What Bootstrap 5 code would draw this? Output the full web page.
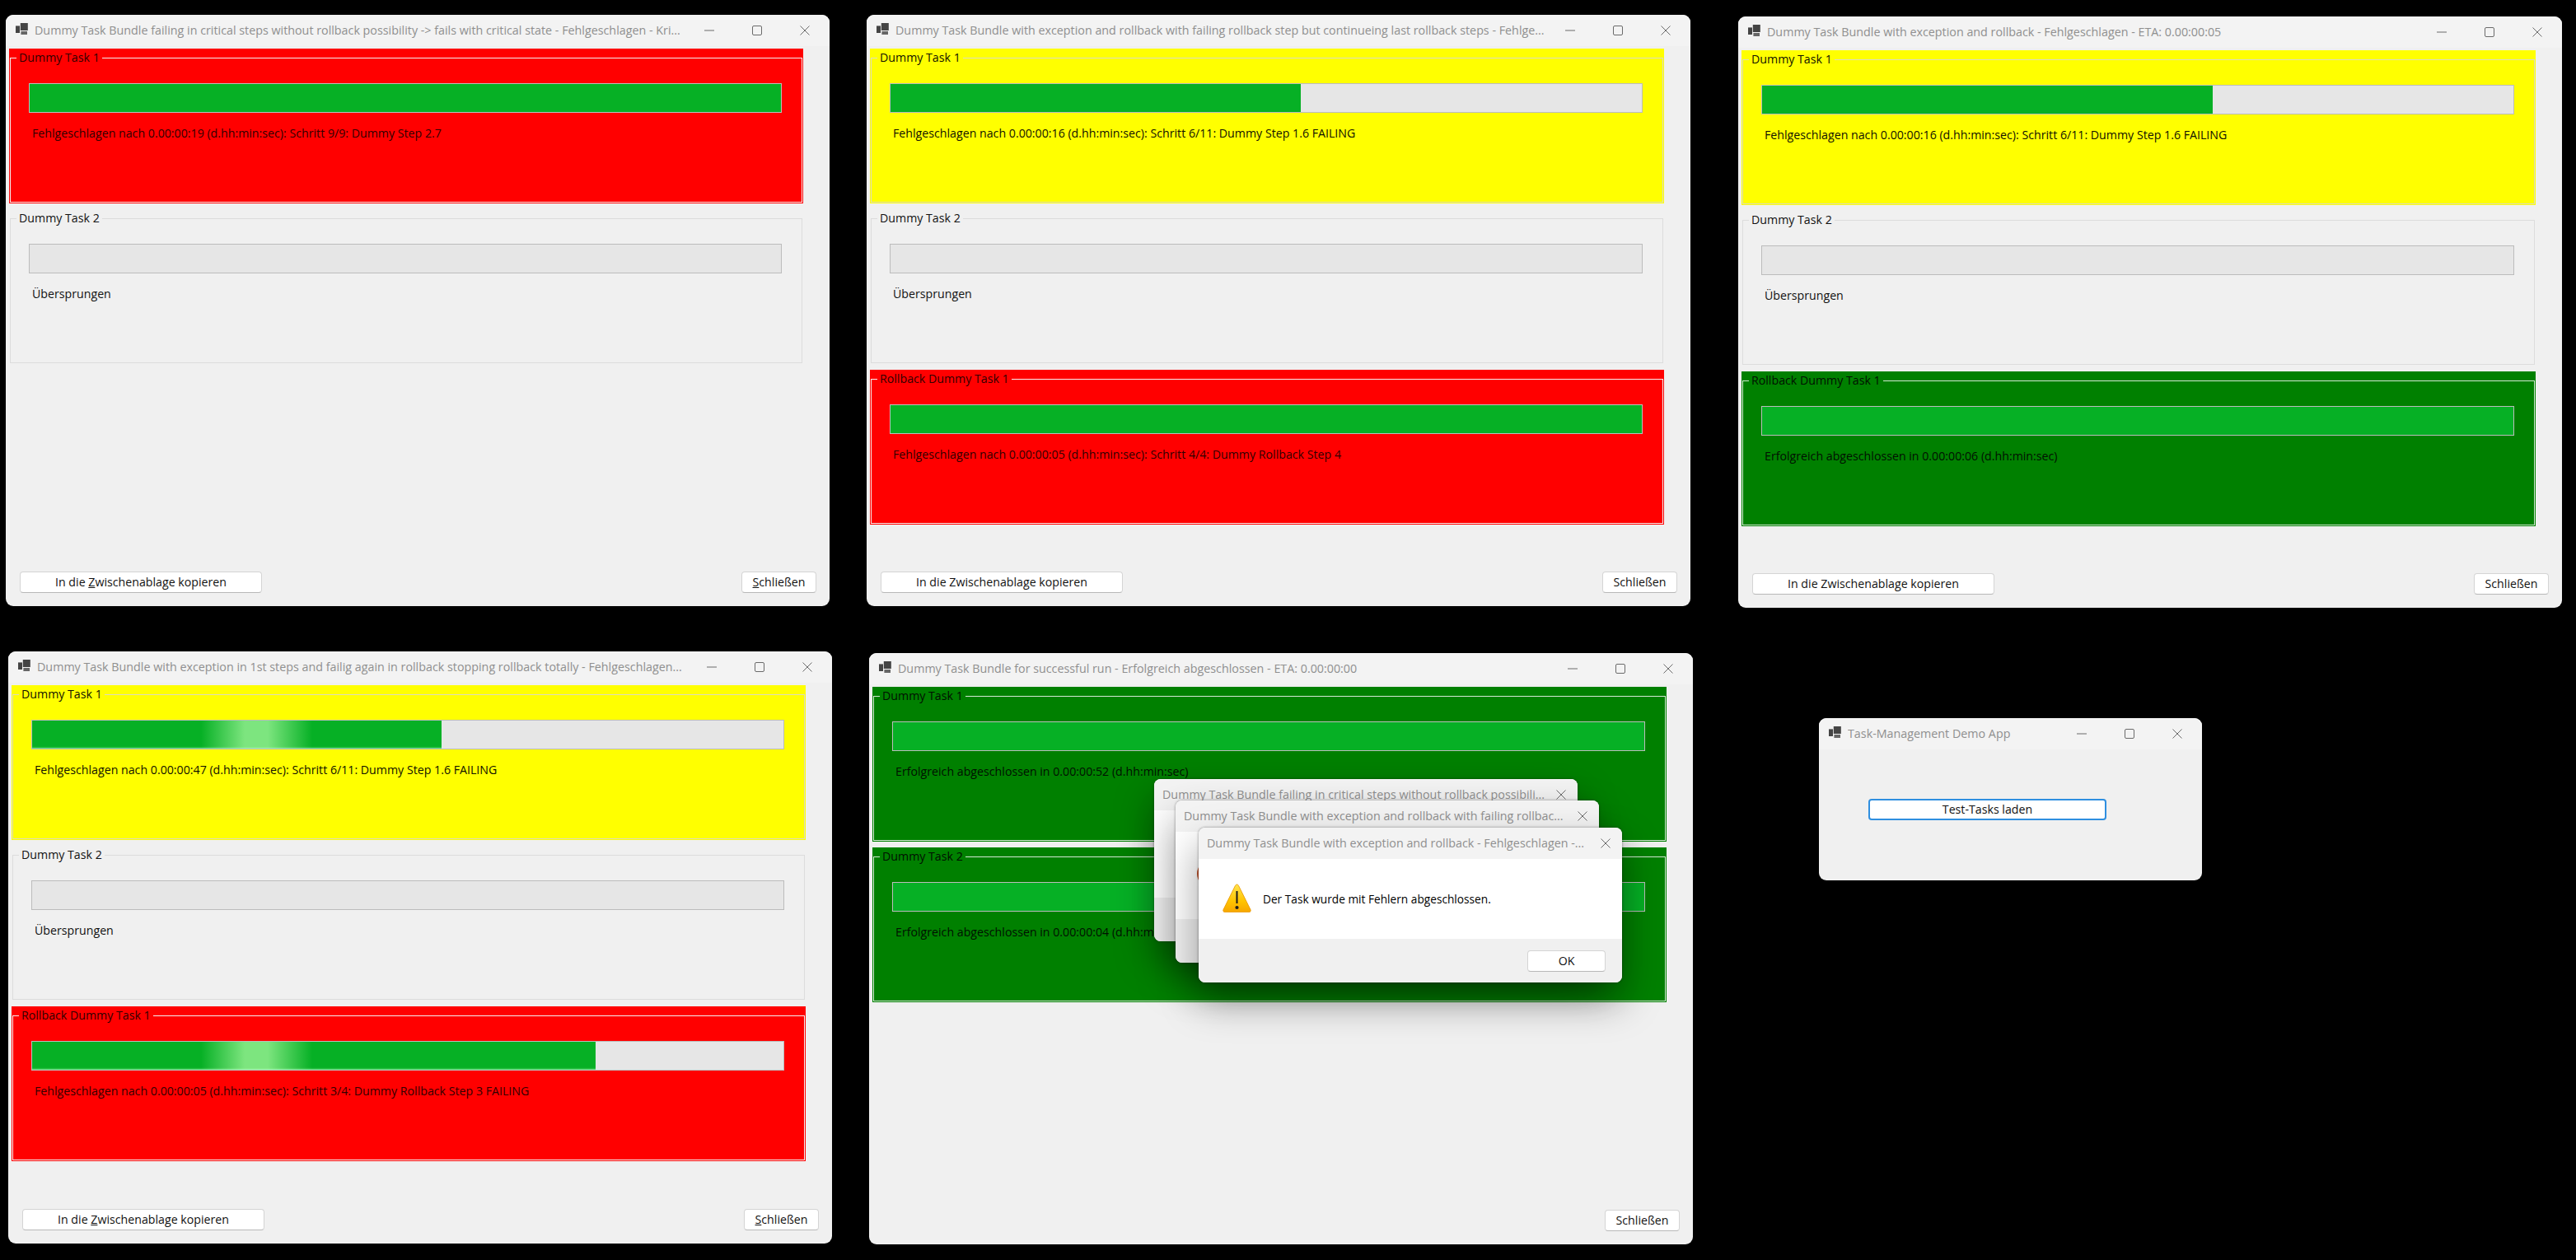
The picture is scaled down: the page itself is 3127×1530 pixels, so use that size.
<!doctype html>
<html lang="de"><head><meta charset="utf-8">
<title>Task-Management Demo App</title>
<link href="https://cdn.jsdelivr.net/npm/bootstrap@5.3.0/dist/css/bootstrap.min.css" rel="stylesheet">
<script src="https://cdn.jsdelivr.net/npm/bootstrap@5.3.0/dist/js/bootstrap.bundle.min.js"></script>
<style>
html,body{height:100%}
body{background:#000;color:#111;font-family:"Open Sans","Noto Sans",sans-serif;font-size:14.2px;line-height:20px;overflow:hidden}
.desk{width:3127px;height:1530px}
.win{position:absolute;width:1000px;height:718px;background:#f0f0f0;border-radius:9px;overflow:hidden}
.w1{left:7px;top:18px}.w2{left:1052px;top:18px}.w3{left:2110px;top:20px}
.w4{left:10px;top:791px;height:719px}.w5{left:1055px;top:793px;height:718px}
.w6{left:2208px;top:872px;width:465px;height:197px}
.ttl{height:38px;flex:none;background:#f3f3f3;color:#8f8f8f;font-size:14.3px;padding-left:12px;white-space:nowrap}
.ttl-ico{width:15px;height:14px;margin-right:8px;margin-top:-5px;flex:none}
.ttl-txt{flex:1 1 auto;min-width:0;overflow:hidden;margin-top:-1px}
.ctl{width:58px;flex:none;display:flex;justify-content:center;align-items:center}
.ctl svg{width:12px;height:12px;fill:none;stroke:#6b6b6b;stroke-width:1}
.ctl-end{margin-right:1px}
.wbody{padding:3px 0 0 4px;flex:1 1 auto;min-height:0}
.tgrp{width:964px;height:188px;margin-bottom:7px;padding:0 1px 1px;color:#000}
.tgrp fieldset{height:187px;border:1px solid #dcdcdc;padding:0;margin:0;min-width:0}
.tgrp legend{float:none;width:auto;font-size:14.2px;line-height:22px;margin:0 0 0 7px;padding:0 3px}
.st-red{background:#f00;color:#300000}.st-red fieldset{border-color:#f4f0f0}
.st-yel{background:#ff0;color:#111100}.st-yel fieldset{border-color:#dcdcc0}
.st-grn{background:#008000;color:#001000}.st-grn fieldset{border-color:#d4e8d4}
.st-none{background:#f0f0f0;color:#111}
.tbar{--bs-progress-bg:#e6e6e6;--bs-progress-bar-bg:#06b025;--bs-progress-border-radius:0;width:914px;height:36px;border:1px solid #bcbcbc;margin:20px 0 0 22px}
.shine{background:linear-gradient(90deg,#06b025 205px,#7de57f 258px,#7de57f 286px,#06b025 340px);box-shadow:inset 0 -2px 2px -1px rgba(190,255,190,.65)}
.tlabel{margin:15px 0 0 26px;white-space:nowrap}
.wfoot{flex:none;padding:0 16px 16px 17px;height:42px}
.wbtn{--bs-btn-padding-y:0;--bs-btn-padding-x:0;--bs-btn-font-size:14.2px;--bs-btn-line-height:24px;--bs-btn-border-radius:4px;--bs-btn-color:#111;--bs-btn-bg:#fff;--bs-btn-border-color:#d4d4d4;--bs-btn-hover-bg:#fff;--bs-btn-hover-color:#111;--bs-btn-hover-border-color:#d4d4d4;height:26px;border-bottom-color:#b8b8b8}
.wbtn-copy{width:294px}.wbtn-close{width:91px}
.wbtn-load{position:absolute;left:60px;top:98px;width:289px;border:2px solid #2f8fe0;line-height:22px}
.dlg{position:absolute;width:514px;background:#fff;border-radius:8px;overflow:hidden;box-shadow:0 22px 48px rgba(0,0,0,.38),0 0 3px rgba(0,0,0,.45)}
.d1{left:1401px;top:946px;height:197px}.d2{left:1427px;top:972px;height:197px}.d3{left:1455px;top:1005px;height:188px}
.dttl{height:38px;flex:none;background:#f3f3f3;color:#8f8f8f;font-size:14.3px;padding-left:10px;white-space:nowrap}
.dttl-txt{flex:1 1 auto;overflow:hidden}
.dttl .ctl{width:40px}
.dmain{flex:1 1 auto;min-height:0;background:#fff;padding-left:29px;color:#000;font-size:13.7px}
.dico{width:35px;height:35px;flex:none;margin-right:14px;margin-top:-2px}
.dsliver{width:34px;height:34px;flex:none;margin-left:26px;margin-top:-4px}
.dfoot{height:53px;flex:none;background:#f0f0f0;padding-right:20px}
.wbtn-ok{width:95px;height:26px}
</style></head>
<body>
<svg width="0" height="0" class="position-absolute" aria-hidden="true">
<symbol id="appico" viewBox="0 0 15 14"><rect x="5.8" width="9" height="9" fill="#444"/><rect y="3.4" width="5" height="8.6" fill="#444"/><rect x="6.4" y="10" width="7.6" height="4" fill="#666"/></symbol>
<symbol id="i-min" viewBox="0 0 12 12"><path d="M0 6h12"/></symbol>
<symbol id="i-max" viewBox="0 0 12 12"><rect x=".5" y=".5" width="11" height="11" rx="1.5"/></symbol>
<symbol id="i-cls" viewBox="0 0 12 12"><path d="M.5.5l11 11M11.5.5l-11 11"/></symbol>
<linearGradient id="warnfill" x1="0" y1="0" x2="0" y2="1"><stop offset="0" stop-color="#ffe44d"/><stop offset=".6" stop-color="#ffc400"/><stop offset="1" stop-color="#f7a600"/></linearGradient>
</svg>
<main class="desk position-relative">

<section class="win w1 d-flex flex-column">
 <header class="ttl d-flex align-items-center"><svg class="ttl-ico"><use href="#appico"/></svg><div class="ttl-txt">Dummy Task Bundle failing in critical steps without rollback possibility -&gt; fails with critical state - Fehlgeschlagen - Kri...</div><span class="ctl"><svg><use href="#i-min"/></svg></span><span class="ctl"><svg><use href="#i-max"/></svg></span><span class="ctl ctl-end"><svg><use href="#i-cls"/></svg></span></header>
 <div class="wbody">
  <div class="tgrp st-red"><fieldset><legend>Dummy Task 1</legend><div class="progress tbar"><div class="progress-bar" style="width:100%"></div></div><div class="tlabel">Fehlgeschlagen nach 0.00:00:19 (d.hh:min:sec): Schritt 9/9: Dummy Step 2.7</div></fieldset></div>
  <div class="tgrp st-none"><fieldset><legend>Dummy Task 2</legend><div class="progress tbar"></div><div class="tlabel">Übersprungen</div></fieldset></div>
 </div>
 <footer class="wfoot d-flex justify-content-between"><button class="btn wbtn wbtn-copy">In die <u>Z</u>wischenablage kopieren</button><button class="btn wbtn wbtn-close"><u>S</u>chließen</button></footer>
</section>

<section class="win w2 d-flex flex-column">
 <header class="ttl d-flex align-items-center"><svg class="ttl-ico"><use href="#appico"/></svg><div class="ttl-txt">Dummy Task Bundle with exception and rollback with failing rollback step but continueing last rollback steps - Fehlge...</div><span class="ctl"><svg><use href="#i-min"/></svg></span><span class="ctl"><svg><use href="#i-max"/></svg></span><span class="ctl ctl-end"><svg><use href="#i-cls"/></svg></span></header>
 <div class="wbody">
  <div class="tgrp st-yel"><fieldset><legend>Dummy Task 1</legend><div class="progress tbar"><div class="progress-bar" style="width:54.6%"></div></div><div class="tlabel">Fehlgeschlagen nach 0.00:00:16 (d.hh:min:sec): Schritt 6/11: Dummy Step 1.6 FAILING</div></fieldset></div>
  <div class="tgrp st-none"><fieldset><legend>Dummy Task 2</legend><div class="progress tbar"></div><div class="tlabel">Übersprungen</div></fieldset></div>
  <div class="tgrp st-red"><fieldset><legend>Rollback Dummy Task 1</legend><div class="progress tbar"><div class="progress-bar" style="width:100%"></div></div><div class="tlabel">Fehlgeschlagen nach 0.00:00:05 (d.hh:min:sec): Schritt 4/4: Dummy Rollback Step 4</div></fieldset></div>
 </div>
 <footer class="wfoot d-flex justify-content-between"><button class="btn wbtn wbtn-copy">In die Zwischenablage kopieren</button><button class="btn wbtn wbtn-close">Schließen</button></footer>
</section>

<section class="win w3 d-flex flex-column">
 <header class="ttl d-flex align-items-center"><svg class="ttl-ico"><use href="#appico"/></svg><div class="ttl-txt">Dummy Task Bundle with exception and rollback - Fehlgeschlagen - ETA: 0.00:00:05</div><span class="ctl"><svg><use href="#i-min"/></svg></span><span class="ctl"><svg><use href="#i-max"/></svg></span><span class="ctl ctl-end"><svg><use href="#i-cls"/></svg></span></header>
 <div class="wbody">
  <div class="tgrp st-yel"><fieldset><legend>Dummy Task 1</legend><div class="progress tbar"><div class="progress-bar" style="width:60%"></div></div><div class="tlabel">Fehlgeschlagen nach 0.00:00:16 (d.hh:min:sec): Schritt 6/11: Dummy Step 1.6 FAILING</div></fieldset></div>
  <div class="tgrp st-none"><fieldset><legend>Dummy Task 2</legend><div class="progress tbar"></div><div class="tlabel">Übersprungen</div></fieldset></div>
  <div class="tgrp st-grn"><fieldset><legend>Rollback Dummy Task 1</legend><div class="progress tbar"><div class="progress-bar" style="width:100%"></div></div><div class="tlabel">Erfolgreich abgeschlossen in 0.00:00:06 (d.hh:min:sec)</div></fieldset></div>
 </div>
 <footer class="wfoot d-flex justify-content-between"><button class="btn wbtn wbtn-copy">In die Zwischenablage kopieren</button><button class="btn wbtn wbtn-close">Schließen</button></footer>
</section>

<section class="win w4 d-flex flex-column">
 <header class="ttl d-flex align-items-center"><svg class="ttl-ico"><use href="#appico"/></svg><div class="ttl-txt">Dummy Task Bundle with exception in 1st steps and failig again in rollback stopping rollback totally - Fehlgeschlagen...</div><span class="ctl"><svg><use href="#i-min"/></svg></span><span class="ctl"><svg><use href="#i-max"/></svg></span><span class="ctl ctl-end"><svg><use href="#i-cls"/></svg></span></header>
 <div class="wbody">
  <div class="tgrp st-yel"><fieldset><legend>Dummy Task 1</legend><div class="progress tbar"><div class="progress-bar shine" style="width:54.5%"></div></div><div class="tlabel">Fehlgeschlagen nach 0.00:00:47 (d.hh:min:sec): Schritt 6/11: Dummy Step 1.6 FAILING</div></fieldset></div>
  <div class="tgrp st-none"><fieldset><legend>Dummy Task 2</legend><div class="progress tbar"></div><div class="tlabel">Übersprungen</div></fieldset></div>
  <div class="tgrp st-red"><fieldset><legend>Rollback Dummy Task 1</legend><div class="progress tbar"><div class="progress-bar shine" style="width:75%"></div></div><div class="tlabel">Fehlgeschlagen nach 0.00:00:05 (d.hh:min:sec): Schritt 3/4: Dummy Rollback Step 3 FAILING</div></fieldset></div>
 </div>
 <footer class="wfoot d-flex justify-content-between"><button class="btn wbtn wbtn-copy">In die <u>Z</u>wischenablage kopieren</button><button class="btn wbtn wbtn-close"><u>S</u>chließen</button></footer>
</section>

<section class="win w5 d-flex flex-column">
 <header class="ttl d-flex align-items-center"><svg class="ttl-ico"><use href="#appico"/></svg><div class="ttl-txt">Dummy Task Bundle for successful run - Erfolgreich abgeschlossen - ETA: 0.00:00:00</div><span class="ctl"><svg><use href="#i-min"/></svg></span><span class="ctl"><svg><use href="#i-max"/></svg></span><span class="ctl ctl-end"><svg><use href="#i-cls"/></svg></span></header>
 <div class="wbody">
  <div class="tgrp st-grn"><fieldset><legend>Dummy Task 1</legend><div class="progress tbar"><div class="progress-bar" style="width:100%"></div></div><div class="tlabel">Erfolgreich abgeschlossen in 0.00:00:52 (d.hh:min:sec)</div></fieldset></div>
  <div class="tgrp st-grn"><fieldset><legend>Dummy Task 2</legend><div class="progress tbar"><div class="progress-bar" style="width:100%"></div></div><div class="tlabel">Erfolgreich abgeschlossen in 0.00:00:04 (d.hh:min:sec)</div></fieldset></div>
 </div>
 <footer class="wfoot d-flex justify-content-end"><button class="btn wbtn wbtn-close">Schließen</button></footer>
</section>

<section class="win w6 d-flex flex-column">
 <header class="ttl d-flex align-items-center"><svg class="ttl-ico"><use href="#appico"/></svg><div class="ttl-txt">Task-Management Demo App</div><span class="ctl"><svg><use href="#i-min"/></svg></span><span class="ctl"><svg><use href="#i-max"/></svg></span><span class="ctl ctl-end"><svg><use href="#i-cls"/></svg></span></header>
 <button class="btn wbtn wbtn-load">Test-Tasks laden</button>
</section>

<section class="dlg d1 d-flex flex-column">
 <header class="dttl d-flex align-items-center"><div class="dttl-txt">Dummy Task Bundle failing in critical steps without rollback possibili...</div><span class="ctl"><svg><use href="#i-cls"/></svg></span></header>
 <div class="dmain d-flex align-items-center"></div>
 <div class="dfoot"></div>
</section>

<section class="dlg d2 d-flex flex-column">
 <header class="dttl d-flex align-items-center"><div class="dttl-txt">Dummy Task Bundle with exception and rollback with failing rollbac...</div><span class="ctl"><svg><use href="#i-cls"/></svg></span></header>
 <div class="dmain d-flex align-items-center p-0"><svg class="dsliver" viewBox="0 0 34 34"><circle cx="17" cy="17" r="17" fill="#c8552b"/></svg></div>
 <div class="dfoot"></div>
</section>

<section class="dlg d3 d-flex flex-column">
 <header class="dttl d-flex align-items-center"><div class="dttl-txt">Dummy Task Bundle with exception and rollback - Fehlgeschlagen -...</div><span class="ctl"><svg><use href="#i-cls"/></svg></span></header>
 <div class="dmain d-flex align-items-center">
  <svg class="dico" viewBox="0 0 35 35"><path d="M17.5 1c1 0 1.6.6 2.1 1.6l14.4 29c.7 1.6-.1 3-1.800 3H2.800c-1.700 0-2.500-1.400-1.800-3l14.400-29C15.900 1.600 16.500 1 17.500 1z" fill="url(#warnfill)" stroke="#e89600" stroke-width=".8"/><rect x="16.500" y="9" width="2" height="15" fill="#1a1a1a"/><circle cx="17.500" cy="29" r="2.100" fill="#1a1a1a"/></svg>
  <span>Der Task wurde mit Fehlern abgeschlossen.</span>
 </div>
 <div class="dfoot d-flex justify-content-end align-items-center"><button class="btn wbtn wbtn-ok">OK</button></div>
</section>

</main>
</body></html>
